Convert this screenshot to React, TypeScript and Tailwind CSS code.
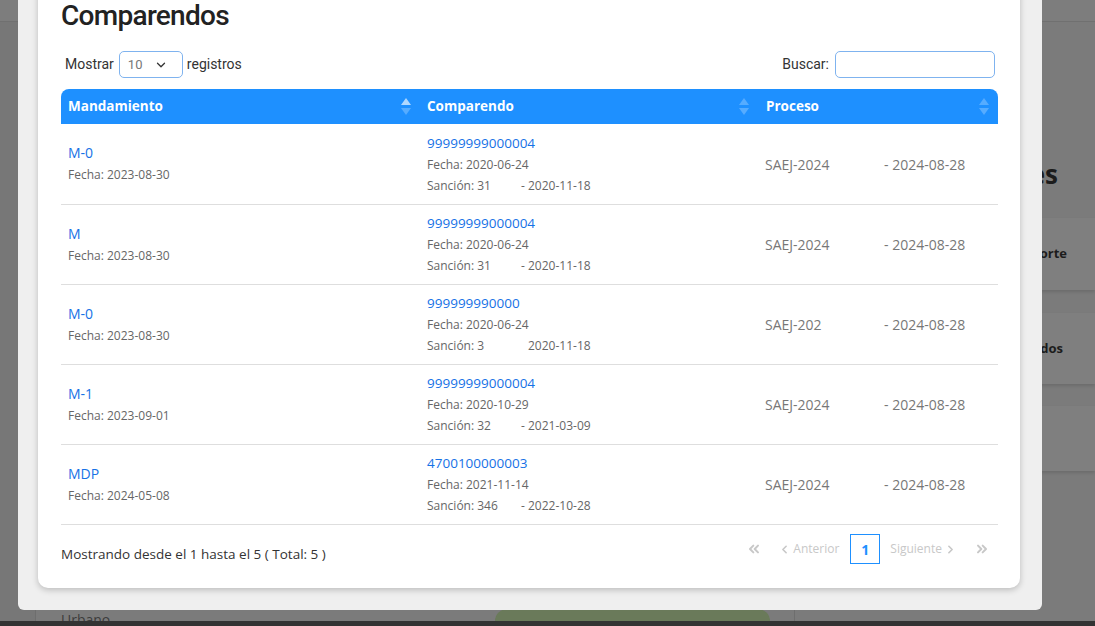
import React from 'react';
import { ChevronDown, ChevronLeft, ChevronRight, ChevronsLeft, ChevronsRight } from 'lucide-react';

type Row = {
  mand: string;
  mandFecha: string;
  comp: string;
  compFecha: string;
  sancion: string;
  sancionDash: boolean;
  sancionFecha: string;
  proc: string;
};

const rows: Row[] = [
  { mand: 'M-0', mandFecha: '2023-08-30', comp: '99999999000004', compFecha: '2020-06-24', sancion: 'Sanción: 31', sancionDash: true, sancionFecha: '2020-11-18', proc: 'SAEJ-2024' },
  { mand: 'M', mandFecha: '2023-08-30', comp: '99999999000004', compFecha: '2020-06-24', sancion: 'Sanción: 31', sancionDash: true, sancionFecha: '2020-11-18', proc: 'SAEJ-2024' },
  { mand: 'M-0', mandFecha: '2023-08-30', comp: '999999990000', compFecha: '2020-06-24', sancion: 'Sanción: 3', sancionDash: false, sancionFecha: '2020-11-18', proc: 'SAEJ-202' },
  { mand: 'M-1', mandFecha: '2023-09-01', comp: '99999999000004', compFecha: '2020-10-29', sancion: 'Sanción: 32', sancionDash: true, sancionFecha: '2021-03-09', proc: 'SAEJ-2024' },
  { mand: 'MDP', mandFecha: '2024-05-08', comp: '4700100000003', compFecha: '2021-11-14', sancion: 'Sanción: 346', sancionDash: true, sancionFecha: '2022-10-28', proc: 'SAEJ-2024' },
];

const SortIcon: React.FC<{ active?: boolean }> = ({ active }) => (
  <svg width="10" height="17" viewBox="0 0 10 17" className="shrink-0">
    <path d="M5 0 L10 7 L0 7 Z" fill="white" fillOpacity={active ? 0.65 : 0.25} />
    <path d="M5 17 L10 10 L0 10 Z" fill="white" fillOpacity={0.25} />
  </svg>
);

const BackPage: React.FC = () => (
  <div className="flex h-[626px] flex-col">
    <div className="h-[22px] border-b border-[#707070] bg-[#7d7d7d]" />
    <div className="flex h-[599px] overflow-hidden">
      <div className="w-[35px] shrink-0 bg-[#777777]" />
      <div className="flex w-[760px] shrink-0 flex-col border-x border-[#6e6e6e] bg-[#7b7b7b]">
        <div className="h-[587px] shrink-0" />
        <div className="flex">
          <div className="w-[459px] shrink-0 pl-[25px] pt-[2px] font-['Open_Sans',sans-serif] text-[14px] leading-[18px] text-[#3c3c3c]">
            Urbano
          </div>
          <div className="h-[20px] w-[275px] rounded-t-[12px] bg-[#6a7a5a]" />
        </div>
      </div>
      <div className="flex w-[300px] shrink-0 flex-col pl-[20px]">
        <div className="mt-[136px] h-[32px] pr-[37px] text-right font-['Open_Sans',sans-serif] text-[26px] font-bold leading-[32px] text-[#1c1c1c]">
          Reportes
        </div>
        <div className="mt-[28px] flex h-[72px] w-[280px] items-center justify-end bg-[#7f7f7f] pr-[28px] text-[13px] font-bold text-[#1c1c1c] shadow-[0_2px_3px_rgba(0,0,0,0.12)]">
          Reporte
        </div>
        <div className="mt-[23px] flex h-[71px] w-[280px] items-center justify-end bg-[#7f7f7f] pr-[32px] text-[13px] font-bold text-[#1c1c1c] shadow-[0_2px_3px_rgba(0,0,0,0.12)]">
          Listados
        </div>
        <div className="mt-[22px] h-[65px] w-[280px] bg-[#7f7f7f] shadow-[0_2px_3px_rgba(0,0,0,0.12)]" />
      </div>
    </div>
    <div className="h-[5px] bg-[#333333]" />
  </div>
);

const App: React.FC = () => {
  return (
    <div className="relative h-[626px] w-[1095px] overflow-hidden bg-[#7b7b7b] font-['Open_Sans',sans-serif]">
      <BackPage />

      <div className="absolute left-[18px] top-0 flex h-[610px] w-[1024px] flex-col justify-end overflow-hidden rounded-b-[6px] bg-[#efefef] pb-[22px] pl-[20px] pr-[22px]">
        <div className="shrink-0 rounded-[10px] bg-white pb-[24px] pl-[23px] pr-[22px] pt-[20px] shadow-[0_2px_6px_rgba(0,0,0,0.22)]">
          <h1 className="font-['Roboto',sans-serif] text-[28px] font-medium leading-[34px] tracking-tight text-[#222]">
            Comparendos
          </h1>

          <div className="mt-[18px] flex h-[27px] items-center justify-between font-['Roboto',sans-serif] text-[14px] text-[#333]">
            <div className="flex items-center pl-[4px]">
              <span>Mostrar</span>
              <div className="ml-[5px] flex h-[27px] w-[64px] items-center justify-between rounded-[5px] border border-[#7fb3ef] pl-[8px] pr-[14px] text-[13px] text-[#777]">
                <span>10</span>
                <ChevronDown className="h-[14px] w-[14px] text-[#333]" strokeWidth={2.2} />
              </div>
              <span className="ml-[4px]">registros</span>
            </div>
            <div className="flex items-center pr-[3px]">
              <span>Buscar:</span>
              <div className="ml-[6px] h-[27px] w-[160px] rounded-[5px] border border-[#7fb3ef]" />
            </div>
          </div>

          <div className="mt-[11px]">
            <div className="flex h-[35px] items-center rounded-t-[8px] bg-[#1e90ff] text-[13.5px] font-bold text-white">
              <div className="flex w-[359px] items-center justify-between pl-[7px] pr-[9px]">
                <span>Mandamiento</span>
                <SortIcon active />
              </div>
              <div className="flex w-[339px] items-center justify-between pl-[7px] pr-[10px]">
                <span>Comparendo</span>
                <SortIcon />
              </div>
              <div className="flex w-[239px] items-center justify-between pl-[7px] pr-[9px]">
                <span>Proceso</span>
                <SortIcon />
              </div>
            </div>

            {rows.map((r, i) => (
              <div key={i} className={`flex items-center border-b border-[#dedede] ${i === 0 ? 'h-[81px]' : 'h-[80px]'}`}>
                <div className="flex w-[359px] flex-col pl-[7px]">
                  <span className="text-[14px] leading-[22px] text-[#1672e6]">{r.mand}</span>
                  <span className="text-[12px] leading-[22px] text-[#666]">Fecha: {r.mandFecha}</span>
                </div>
                <div className="flex w-[339px] flex-col pl-[7px]">
                  <span className="text-[13.5px] leading-[21px] text-[#1672e6]">{r.comp}</span>
                  <span className="text-[12px] leading-[21px] text-[#666]">Fecha: {r.compFecha}</span>
                  <span className="text-[12px] leading-[21px] text-[#666]">
                    <span className="inline-block w-[94px]">{r.sancion}</span>
                    <span className={r.sancionDash ? '' : 'invisible'}>- </span>
                    {r.sancionFecha}
                  </span>
                </div>
                <div className="w-[239px] pl-[6px] text-[14px] text-[#777]">
                  <span className="inline-block w-[119px]">{r.proc}</span>
                  <span>- 2024-08-28</span>
                </div>
              </div>
            ))}
          </div>

          <div className="flex items-start justify-between pt-[9px]">
            <span className="pt-[10px] text-[13.5px] leading-[20px] text-[#333]">Mostrando desde el 1 hasta el 5 ( Total: 5 )</span>
            <div className="flex items-center pr-[8px] text-[12px] text-[#c8c8c8]">
              <ChevronsLeft className="h-[16px] w-[16px]" strokeWidth={3} />
              <span className="ml-[16px] flex items-center">
                <ChevronLeft className="h-[13px] w-[13px]" strokeWidth={3} />
                <span className="ml-[2px]">Anterior</span>
              </span>
              <span className="ml-[11px] flex h-[30px] w-[30px] items-center justify-center border border-[#1e90ff] text-[14px] font-bold text-[#1e90ff]">
                1
              </span>
              <span className="ml-[10px] flex items-center">
                <span>Siguiente</span>
                <ChevronRight className="ml-[2px] h-[13px] w-[13px]" strokeWidth={3} />
              </span>
              <ChevronsRight className="ml-[17px] h-[16px] w-[16px]" strokeWidth={3} />
            </div>
          </div>
        </div>
      </div>
    </div>
  );
};

export default App;
